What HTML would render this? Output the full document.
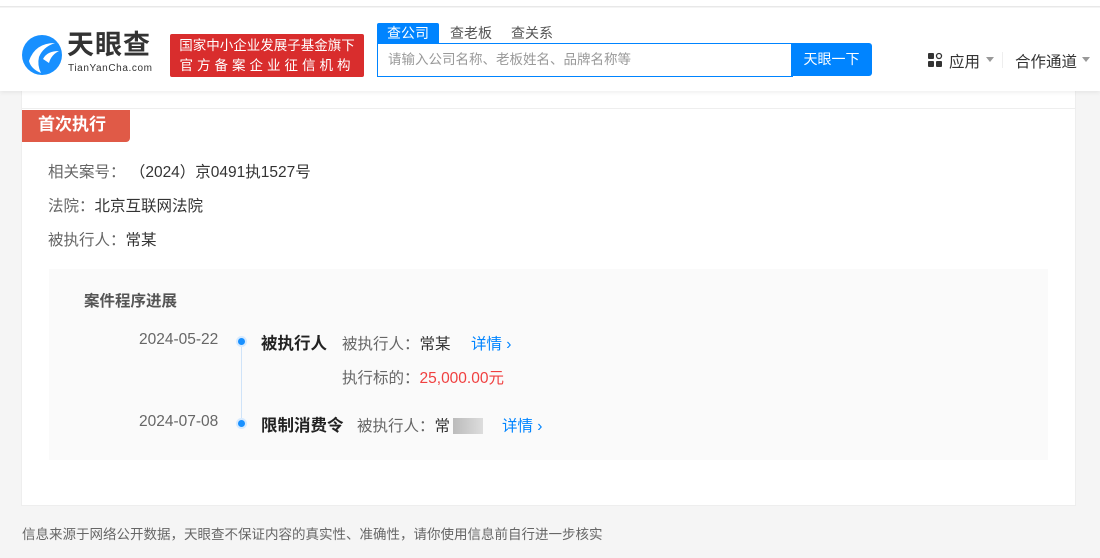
<!DOCTYPE html>
<html><head><meta charset="utf-8"><style>
*{margin:0;padding:0;box-sizing:border-box}
body{width:1100px;height:558px;background:#f5f5f5;font-family:"Liberation Sans","Noto Sans CJK SC",sans-serif;position:relative;overflow:hidden;color:#333}
.a{position:absolute}
</style></head><body>
<div class="a" style="left:0;top:0;width:1100px;height:7px;background:#fff;border-bottom:1px solid #e8e8e8"></div>
<div class="a" style="left:21px;top:90px;width:1055px;height:416px;background:#fff;border:1px solid #eee"></div>
<div class="a" style="left:21px;top:108px;width:1055px;height:1px;background:#eee"></div>
<div class="a" style="left:0;top:8px;width:1100px;height:83px;background:#fff;box-shadow:0 2px 4px rgba(0,0,0,.06)"></div>
<svg class="a" style="left:21px;top:33px" width="42" height="44" viewBox="0 0 42 44">
<circle cx="21" cy="22" r="20" fill="#1890ff"/>
<path d="M8 28 Q14 10 34 10 Q22 14 18 24 Q16 32 20 40 Q10 36 8 28Z" fill="#fff"/>
<path d="M22 26 Q26 18 38 18 Q30 22 28 30Z" fill="#fff"/>
</svg>
<div class="a" style="left:67px;top:29px;font-size:27px;line-height:32px;font-weight:bold;color:#333;letter-spacing:1px">天眼查</div>
<div class="a" style="left:68px;top:63px;font-size:10px;line-height:11px;color:#333;letter-spacing:.6px">TianYanCha.com</div>
<div class="a" style="left:170px;top:34px;width:194px;height:43px;background:#d92d2d;border-radius:2px;color:#fff;font-size:13.5px;text-align:center;line-height:20px;padding-top:2px">国家中小企业发展子基金旗下<br><span style="letter-spacing:4px">官方备案企业征信机构</span></div>
<div class="a" style="left:377px;top:23px;width:62px;height:20px;background:#0084ff;color:#fff;font-size:14px;text-align:center;line-height:20px;border-radius:2px 2px 0 0">查公司</div>
<div class="a" style="left:450px;top:23px;font-size:14px;color:#555;line-height:20px">查老板</div>
<div class="a" style="left:511px;top:23px;font-size:14px;color:#555;line-height:20px">查关系</div>
<div class="a" style="left:377px;top:43px;width:416px;height:34px;border:1px solid #0084ff;font-size:13.5px;color:#999;line-height:32px;padding-left:10px">请输入公司名称、老板姓名、品牌名称等</div>
<div class="a" style="left:791px;top:43px;width:81px;height:33px;background:#0084ff;color:#fff;font-size:14px;text-align:center;line-height:33px;border-radius:0 3px 3px 0">天眼一下</div>
<svg class="a" style="left:927px;top:52px" width="16" height="16"><rect x="1" y="1" width="6" height="6" rx="1" fill="#333"/><circle cx="12" cy="4" r="2.5" fill="none" stroke="#333" stroke-width="1.3"/><rect x="1" y="9" width="6" height="6" rx="1" fill="#333"/><rect x="9" y="9" width="6" height="6" rx="1" fill="#333"/></svg>
<div class="a" style="left:949px;top:50px;font-size:15.5px;color:#333">应用</div>
<div class="a" style="left:986px;top:57px;border:4px solid transparent;border-top:5px solid #999"></div>
<div class="a" style="left:1002px;top:52px;width:1px;height:16px;background:#eee"></div>
<div class="a" style="left:1015px;top:50px;font-size:15.5px;color:#333">合作通道</div>
<div class="a" style="left:1082px;top:57px;border:4px solid transparent;border-top:5px solid #999"></div>
<div class="a" style="left:22px;top:110px;width:108px;height:32px;background:#e05a47;border-radius:0 0 4px 0;color:#fff;font-size:17px;font-weight:bold;line-height:30px;padding-left:16px">首次执行</div>
<div class="a" style="left:48px;top:160px;font-size:15.5px;color:#666">相关案号：<span style="color:#333">&nbsp;（2024）京0491执1527号</span></div>
<div class="a" style="left:48px;top:194px;font-size:15.5px;color:#666">法院：<span style="color:#333">北京互联网法院</span></div>
<div class="a" style="left:48px;top:228px;font-size:15.5px;color:#666">被执行人：<span style="color:#333">常某</span></div>
<div class="a" style="left:49px;top:269px;width:999px;height:191px;background:#fafafa"></div>
<div class="a" style="left:84px;top:289px;font-size:15.5px;font-weight:bold;color:#555">案件程序进展</div>
<div class="a" style="left:241px;top:341px;width:1px;height:82px;background:#cfe3f8"></div>
<div class="a" style="left:236px;top:336px;width:11px;height:11px;border-radius:50%;background:#1890ff;border:2px solid #d6eaff"></div>
<div class="a" style="left:236px;top:418px;width:11px;height:11px;border-radius:50%;background:#1890ff;border:2px solid #d6eaff"></div>
<div class="a" style="left:139px;top:331px;font-size:15.5px;color:#666">2024-05-22</div>
<div class="a" style="left:261px;top:330px;font-size:16.5px;font-weight:bold;color:#222">被执行人</div>
<div class="a" style="left:342px;top:332px;font-size:15.5px;color:#666">被执行人：<span style="color:#333">常某</span></div>
<div class="a" style="left:471px;top:332px;font-size:15.5px;color:#0084ff">详情 ›</div>
<div class="a" style="left:342px;top:366px;font-size:15.5px;color:#666">执行标的：<span style="color:#f04040">25,000.00元</span></div>
<div class="a" style="left:139px;top:413px;font-size:15.5px;color:#666">2024-07-08</div>
<div class="a" style="left:261px;top:412px;font-size:16.5px;font-weight:bold;color:#222">限制消费令</div>
<div class="a" style="left:357px;top:414px;font-size:15.5px;color:#666">被执行人：<span style="color:#333">常</span></div>
<div class="a" style="left:453px;top:418px;width:30px;height:16px;background:linear-gradient(90deg,#bbb,#ccc,#ddd)"></div>
<div class="a" style="left:502px;top:414px;font-size:15.5px;color:#0084ff">详情 ›</div>
<div class="a" style="left:22px;top:523px;font-size:13.5px;color:#666">信息来源于网络公开数据，天眼查不保证内容的真实性、准确性，请你使用信息前自行进一步核实</div>
</body></html>
